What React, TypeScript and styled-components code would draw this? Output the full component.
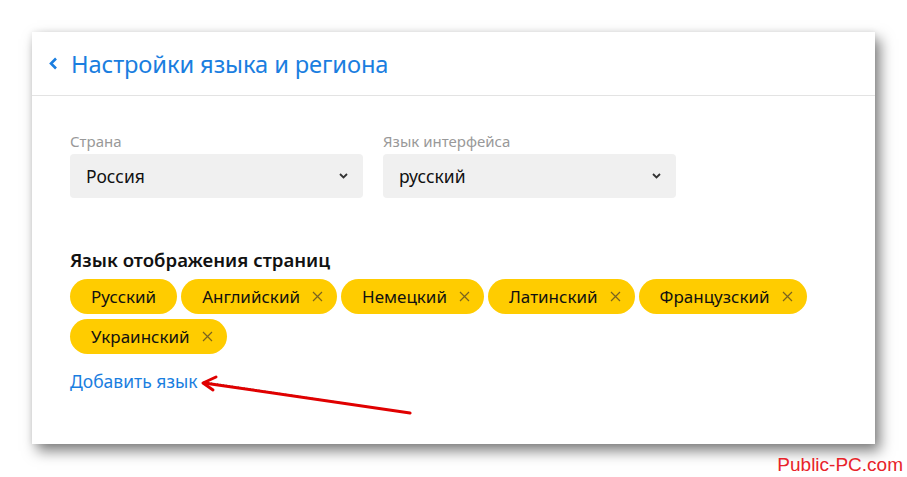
import React from "react";
import styled, { createGlobalStyle } from "styled-components";

const GlobalStyle = createGlobalStyle`
  html, body {
    margin: 0;
    padding: 0;
    background: #ffffff;
  }
  body {
    font-family: "Noto Sans", "Open Sans", sans-serif;
    width: 907px;
    height: 477px;
    overflow: hidden;
    position: relative;
  }
`;

const Page = styled.div`
  position: relative;
  width: 907px;
  height: 477px;
  padding: 32px 0 0 32px;
  box-sizing: border-box;
`;

const Card = styled.section`
  width: 843px;
  height: 412px;
  background: #ffffff;
  box-shadow: 5px 7px 13px rgba(0, 0, 0, 0.5), 0 0 6px rgba(0, 0, 0, 0.08);
  display: flex;
  flex-direction: column;
`;

const Header = styled.header`
  height: 64px;
  border-bottom: 1px solid #e3e3e3;
  display: flex;
  align-items: center;
  gap: 12px;
  padding-left: 16px;
  box-sizing: border-box;
`;

const BackIcon = styled.svg`
  width: 11px;
  height: 15px;
  margin-top: -1px;
`;

const Title = styled.h1`
  margin: 0;
  font-size: 23.7px;
  font-weight: 400;
  color: #1a7ee0;
  letter-spacing: -0.1px;
`;

const Body = styled.div`
  padding: 36px 0 0 38px;
  display: flex;
  flex-direction: column;
`;

const Fields = styled.div`
  display: flex;
  gap: 20px;
`;

const Field = styled.label`
  display: flex;
  flex-direction: column;
  gap: 3px;
  width: 293px;
`;

const FieldLabel = styled.span`
  font-size: 15px;
  line-height: 19px;
  color: #999999;
`;

const Select = styled.div`
  height: 44px;
  border-radius: 4px;
  background: #f0f0f0;
  display: flex;
  align-items: center;
  justify-content: space-between;
  padding: 0 15px 0 16px;
  box-sizing: border-box;
  font-size: 17.5px;
  color: #111111;
`;

const Caret = styled.svg`
  width: 9px;
  height: 6px;
`;

const SectionTitle = styled.h2`
  margin: 51px 0 8px;
  font-size: 18.6px;
  line-height: 22px;
  font-weight: 600;
  color: #111111;
`;

const Chips = styled.div`
  display: flex;
  flex-wrap: wrap;
  gap: 5px 4px;
  width: 760px;
`;

const Chip = styled.span<{ removable: boolean }>`
  height: 35px;
  border-radius: 18px;
  background: #ffcc00;
  display: inline-flex;
  align-items: center;
  gap: 12px;
  padding: 0 ${(p) => (p.removable ? "14px" : "21px")} 0 21px;
  font-size: 17px;
  color: #111111;
`;

const Remove = styled.svg`
  width: 11px;
  height: 11px;
`;

const AddLink = styled.a`
  margin-top: 17px;
  font-size: 17.5px;
  line-height: 20px;
  color: #1a7ee0;
  text-decoration: none;
  align-self: flex-start;
`;

const Pointer = styled.svg`
  position: absolute;
  left: 195px;
  top: 374px;
  width: 225px;
  height: 50px;
  overflow: visible;
`;

const Watermark = styled.span`
  position: absolute;
  right: 4px;
  bottom: 1px;
  font-family: "Liberation Sans", Arial, sans-serif;
  font-size: 19px;
  color: #e8232a;
`;

const languages: { name: string; removable: boolean }[] = [
  { name: "Русский", removable: false },
  { name: "Английский", removable: true },
  { name: "Немецкий", removable: true },
  { name: "Латинский", removable: true },
  { name: "Французский", removable: true },
  { name: "Украинский", removable: true },
];

export default function App() {
  return (
    <>
      <GlobalStyle />
      <Page>
        <Card>
          <Header>
            <BackIcon viewBox="0 0 11 15">
              <path d="M8 2.5 L3 7.5 L8 12.5" fill="none" stroke="#1a7ee0" strokeWidth="2.6" />
            </BackIcon>
            <Title>Настройки языка и региона</Title>
          </Header>
          <Body>
            <Fields>
              <Field>
                <FieldLabel>Страна</FieldLabel>
                <Select>
                  Россия
                  <Caret viewBox="0 0 9 6">
                    <path d="M1 1 L4.5 4.5 L8 1" fill="none" stroke="#333" strokeWidth="1.8" />
                  </Caret>
                </Select>
              </Field>
              <Field>
                <FieldLabel>Язык интерфейса</FieldLabel>
                <Select>
                  русский
                  <Caret viewBox="0 0 9 6">
                    <path d="M1 1 L4.5 4.5 L8 1" fill="none" stroke="#333" strokeWidth="1.8" />
                  </Caret>
                </Select>
              </Field>
            </Fields>
            <SectionTitle>Язык отображения страниц</SectionTitle>
            <Chips>
              {languages.map((l) => (
                <Chip key={l.name} removable={l.removable}>
                  {l.name}
                  {l.removable && (
                    <Remove viewBox="0 0 11 11">
                      <path d="M1 1 L10 10 M10 1 L1 10" stroke="#7a6420" strokeWidth="1.2" />
                    </Remove>
                  )}
                </Chip>
              ))}
            </Chips>
            <AddLink href="#">Добавить язык</AddLink>
          </Body>
        </Card>
        <Pointer viewBox="0 0 225 50">
          <path d="M10 10 L216 41" stroke="#555" strokeWidth="1" strokeDasharray="1.5 1.5" transform="translate(0 -2)" />
          <path d="M9 9 L215 39" stroke="#e00000" strokeWidth="3" strokeLinecap="round" />
          <path d="M21 3 L8 9 L18 16" fill="none" stroke="#e00000" strokeWidth="3" strokeLinecap="round" strokeLinejoin="round" />
        </Pointer>
        <Watermark>Public-PC.com</Watermark>
      </Page>
    </>
  );
}
